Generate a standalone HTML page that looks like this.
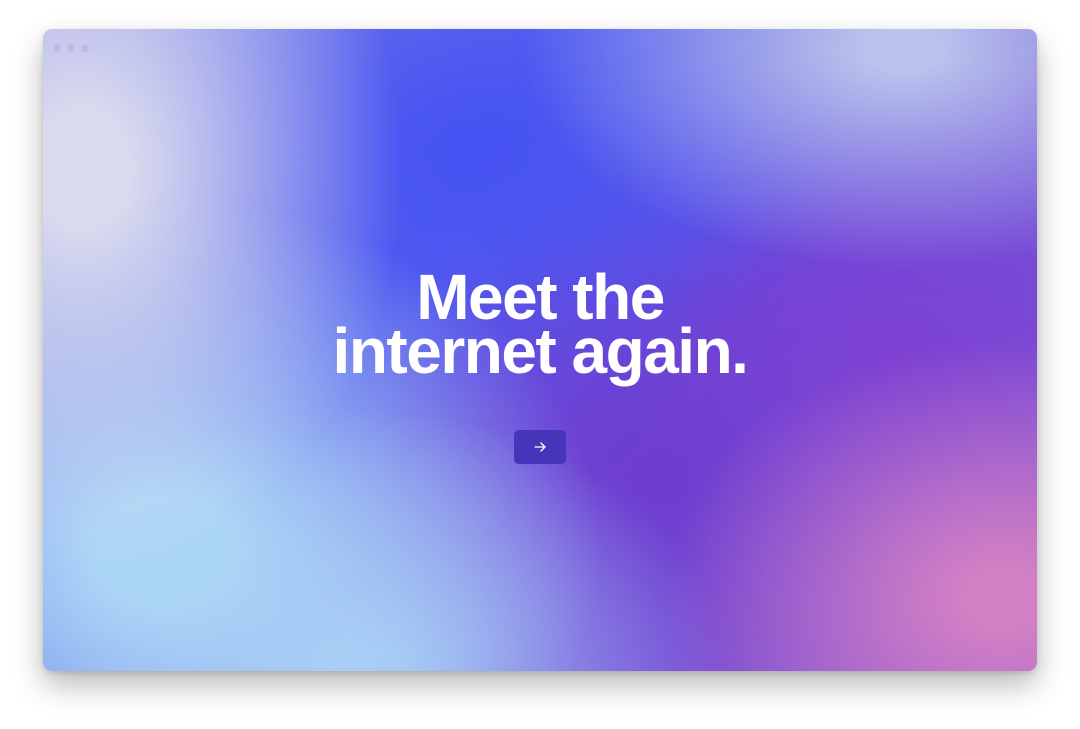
<!DOCTYPE html>
<html><head><style>
html,body{margin:0;padding:0;width:1080px;height:729px;background:#fff;overflow:hidden}
.win{position:absolute;left:43px;top:29px;width:994px;height:642px;border-radius:9px;overflow:hidden;
box-shadow:0 14px 30px rgba(0,0,0,0.28),0 2px 6px rgba(0,0,0,0.12);
background:
radial-gradient(ellipse 320px 400px at 40px 140px,rgba(216,218,238,1) 15%,rgba(216,218,238,0) 100%),
radial-gradient(ellipse 440px 350px at 120px 520px,rgba(172,214,246,1) 15%,rgba(172,214,246,0) 100%),
radial-gradient(ellipse 360px 260px at 320px 640px,rgba(165,200,245,0.95) 10%,rgba(165,200,245,0) 100%),
radial-gradient(ellipse 340px 260px at 960px 570px,rgba(212,128,196,1) 10%,rgba(212,128,196,0) 100%),
radial-gradient(ellipse 380px 220px at 860px 20px,rgba(185,195,236,1) 10%,rgba(185,195,236,0) 100%),
radial-gradient(ellipse 260px 200px at 850px 330px,rgba(125,64,210,1),rgba(125,64,210,0) 100%),
radial-gradient(ellipse 300px 260px at 620px 450px,rgba(110,60,205,0.9),rgba(110,60,205,0) 100%),
radial-gradient(ellipse 380px 260px at 430px 120px,rgba(70,82,242,1),rgba(70,82,242,0) 100%),
linear-gradient(135deg,#8a8ee8 0%,#5560ee 35%,#6a48dc 60%,#8a58d0 100%);}
.dots{position:absolute;left:10px;top:10px}
.dots span{display:inline-block;width:8px;height:8px;border-radius:50%;background:#c6b6e8;margin-right:6px}
h1{position:absolute;left:0;right:0;top:241px;margin:0;text-align:center;color:#fff;
font-family:"Liberation Sans",sans-serif;font-weight:bold;font-size:64px;line-height:54px;letter-spacing:-1.5px}
.btn{position:absolute;left:471px;top:401px;width:52px;height:34px;border-radius:5px;background:#4535b8}
.btn svg{position:absolute;left:19px;top:10px}
</style></head><body>
<div class="win">
<div class="dots"><span></span><span></span><span></span></div>
<h1>Meet the<br>internet again.</h1>
<div class="btn"><svg width="14" height="14" viewBox="0 0 14 14"><path d="M2 7H12M8 3L12 7L8 11" fill="none" stroke="#fff" stroke-width="1.3" stroke-linecap="round" stroke-linejoin="round"/></svg></div>
</div>
</body></html>
